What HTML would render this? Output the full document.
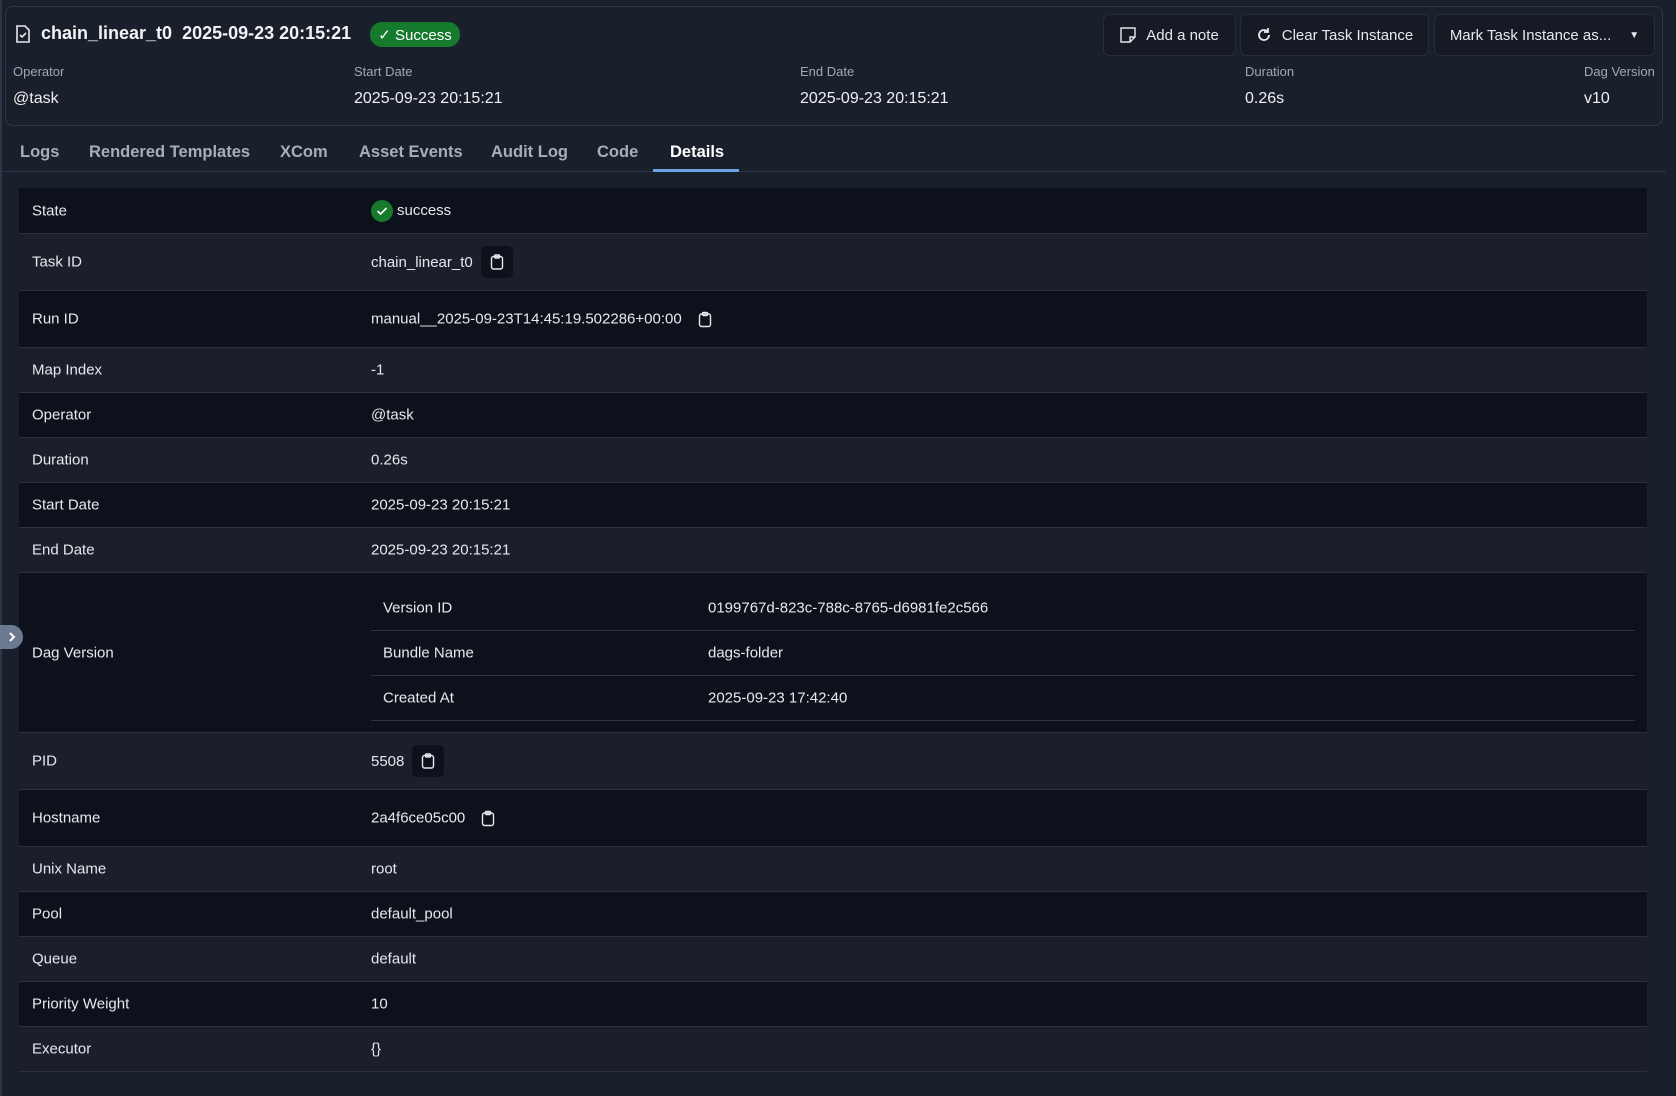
<!DOCTYPE html>
<html><head><meta charset="utf-8"><style>
*{box-sizing:border-box;margin:0;padding:0}
body{width:1676px;height:1096px;background:#1a1f2c;font-family:"Liberation Sans",sans-serif;color:#e6e8ec;position:relative;overflow:hidden;font-size:15px}
.a{position:absolute;white-space:nowrap}
.card{position:absolute;left:5px;top:6px;width:1658px;height:120px;border:1px solid #2d3648;border-radius:8px}
.lbl{font-size:13px;color:#a0a8b8}
.val{font-size:16px;color:#eef0f3}
.btn{position:absolute;top:14px;height:42px;border:1px solid #262e3d;border-radius:6px;background:#151a25;font-size:15px;display:flex;align-items:center;justify-content:center;gap:10px;color:#e6e8ec}
.tab{position:absolute;top:143px;font-size:16.5px;font-weight:bold;color:#a6aebb}
.row{position:absolute;left:19px;width:1628px;border-bottom:1px solid #2a3242}
.d{background:#0c111b}.l{background:#1a1f2b}
.row .k{position:absolute;left:13px;top:50%;transform:translateY(-50%);font-size:15px}
.row .v{position:absolute;left:352px;top:50%;transform:translateY(-50%);font-size:15px;display:flex;align-items:center;gap:8px}
.cb{width:32px;height:32px;background:#0c111b;border-radius:5px;display:flex;align-items:center;justify-content:center}
.nr{position:absolute;left:352px;width:1264px;height:45px;border-bottom:1px solid #2a3242}
.nr .k{position:absolute;left:12px;top:50%;transform:translateY(-50%)}
.nr .v{position:absolute;left:337px;top:50%;transform:translateY(-50%)}
</style></head><body>
<div style="position:absolute;left:0;top:0;width:2px;height:1096px;background:#2d3648"></div>
<div class="card"></div>
<svg class="a" style="left:15px;top:25px" width="16" height="18" viewBox="0 0 16 18" fill="none" stroke="#e6e8ec" stroke-width="1.6"><path d="M2 1h8l4 4v12H2z"/><path d="M5 10l2 2 4-4"/></svg>
<div class="a" style="left:41px;top:23px;font-size:18px;font-weight:bold;color:#f2f3f5">chain_linear_t0&nbsp; 2025-09-23 20:15:21</div>
<div class="a" style="left:370px;top:22px;width:90px;height:25px;background:#157a2c;border-radius:12px;font-size:15px;color:#fff;display:flex;align-items:center;justify-content:center">✓ Success</div>
<div class="btn" style="left:1103px;width:133px"><svg width="16" height="16" viewBox="0 0 16 16" fill="none" stroke="#e6e8ec" stroke-width="1.4"><path d="M1 1h14v9l-5 5H1z"/><path d="M15 10h-5v5"/></svg>Add a note</div>
<div class="btn" style="left:1240px;width:189px"><svg width="16" height="16" viewBox="0 0 16 16" fill="none" stroke="#e6e8ec" stroke-width="1.8"><path d="M13 8a5 5 0 1 1-2-4"/><path d="M12 1v4H8"/></svg>Clear Task Instance</div>
<div class="btn" style="left:1434px;width:221px;gap:18px">Mark Task Instance as... <span style="font-size:10px">▼</span></div>
<div class="a lbl" style="left:13px;top:64px">Operator</div><div class="a val" style="left:13px;top:90px">@task</div>
<div class="a lbl" style="left:354px;top:64px">Start Date</div><div class="a val" style="left:354px;top:90px">2025-09-23 20:15:21</div>
<div class="a lbl" style="left:800px;top:64px">End Date</div><div class="a val" style="left:800px;top:90px">2025-09-23 20:15:21</div>
<div class="a lbl" style="left:1245px;top:64px">Duration</div><div class="a val" style="left:1245px;top:90px">0.26s</div>
<div class="a lbl" style="left:1584px;top:64px">Dag Version</div><div class="a val" style="left:1584px;top:90px">v10</div>
<div class="tab" style="left:20px">Logs</div>
<div class="tab" style="left:89px">Rendered Templates</div>
<div class="tab" style="left:280px">XCom</div>
<div class="tab" style="left:359px">Asset Events</div>
<div class="tab" style="left:491px">Audit Log</div>
<div class="tab" style="left:597px">Code</div>
<div class="tab" style="left:670px;color:#fff">Details</div>
<div class="a" style="left:2px;top:171px;width:1664px;height:1px;background:#2d3648"></div>
<div class="a" style="left:653px;top:169px;width:86px;height:3px;background:#6ba1e8"></div>

<div class="row d" style="top:188px;height:46px"><span class="k">State</span><span class="v" style="gap:4px"><svg width="22" height="22"><circle cx="11" cy="11" r="11" fill="#157a2c"/><path d="M6.5 11l3 3 6-6" stroke="#fff" stroke-width="1.6" fill="none"/></svg>success</span></div>
<div class="row l" style="top:234px;height:57px"><span class="k">Task ID</span><span class="v">chain_linear_t0<span class="cb"><svg width="14" height="16" viewBox="0 0 14 16" fill="none" stroke="#e6e8ec" stroke-width="1.4"><rect x="1.5" y="2.5" width="11" height="12.5" rx="2"/><rect x="4.5" y="1" width="5" height="3" rx="1"/></svg></span></span></div>
<div class="row d" style="top:291px;height:57px"><span class="k">Run ID</span><span class="v" style="gap:16px">manual__2025-09-23T14:45:19.502286+00:00<svg width="14" height="16" viewBox="0 0 14 16" fill="none" stroke="#e6e8ec" stroke-width="1.4"><rect x="1.5" y="2.5" width="11" height="12.5" rx="2"/><rect x="4.5" y="1" width="5" height="3" rx="1"/></svg></span></div>
<div class="row l" style="top:348px;height:45px"><span class="k">Map Index</span><span class="v">-1</span></div>
<div class="row d" style="top:393px;height:45px"><span class="k">Operator</span><span class="v">@task</span></div>
<div class="row l" style="top:438px;height:45px"><span class="k">Duration</span><span class="v">0.26s</span></div>
<div class="row d" style="top:483px;height:45px"><span class="k">Start Date</span><span class="v">2025-09-23 20:15:21</span></div>
<div class="row l" style="top:528px;height:45px"><span class="k">End Date</span><span class="v">2025-09-23 20:15:21</span></div>
<div class="row d" style="top:573px;height:160px"><span class="k">Dag Version</span>
 <div class="nr" style="top:12px;height:46px"><span class="k">Version ID</span><span class="v">0199767d-823c-788c-8765-d6981fe2c566</span></div>
 <div class="nr" style="top:58px"><span class="k">Bundle Name</span><span class="v">dags-folder</span></div>
 <div class="nr" style="top:103px"><span class="k">Created At</span><span class="v">2025-09-23 17:42:40</span></div>
</div>
<div class="row l" style="top:733px;height:57px"><span class="k">PID</span><span class="v">5508<span class="cb"><svg width="14" height="16" viewBox="0 0 14 16" fill="none" stroke="#e6e8ec" stroke-width="1.4"><rect x="1.5" y="2.5" width="11" height="12.5" rx="2"/><rect x="4.5" y="1" width="5" height="3" rx="1"/></svg></span></span></div>
<div class="row d" style="top:790px;height:57px"><span class="k">Hostname</span><span class="v" style="gap:16px">2a4f6ce05c00<svg width="14" height="16" viewBox="0 0 14 16" fill="none" stroke="#e6e8ec" stroke-width="1.4"><rect x="1.5" y="2.5" width="11" height="12.5" rx="2"/><rect x="4.5" y="1" width="5" height="3" rx="1"/></svg></span></div>
<div class="row l" style="top:847px;height:45px"><span class="k">Unix Name</span><span class="v">root</span></div>
<div class="row d" style="top:892px;height:45px"><span class="k">Pool</span><span class="v">default_pool</span></div>
<div class="row l" style="top:937px;height:45px"><span class="k">Queue</span><span class="v">default</span></div>
<div class="row d" style="top:982px;height:45px"><span class="k">Priority Weight</span><span class="v">10</span></div>
<div class="row l" style="top:1027px;height:45px"><span class="k">Executor</span><span class="v">{}</span></div>
<div class="a" style="left:0;top:625px;width:23px;height:24px;background:#6b7a90;border-radius:0 12px 12px 0;display:flex;align-items:center;justify-content:center"><svg width="10" height="12" viewBox="0 0 10 12"><path d="M3 2l4 4-4 4" stroke="#fff" stroke-width="2" fill="none"/></svg></div>
</body></html>
